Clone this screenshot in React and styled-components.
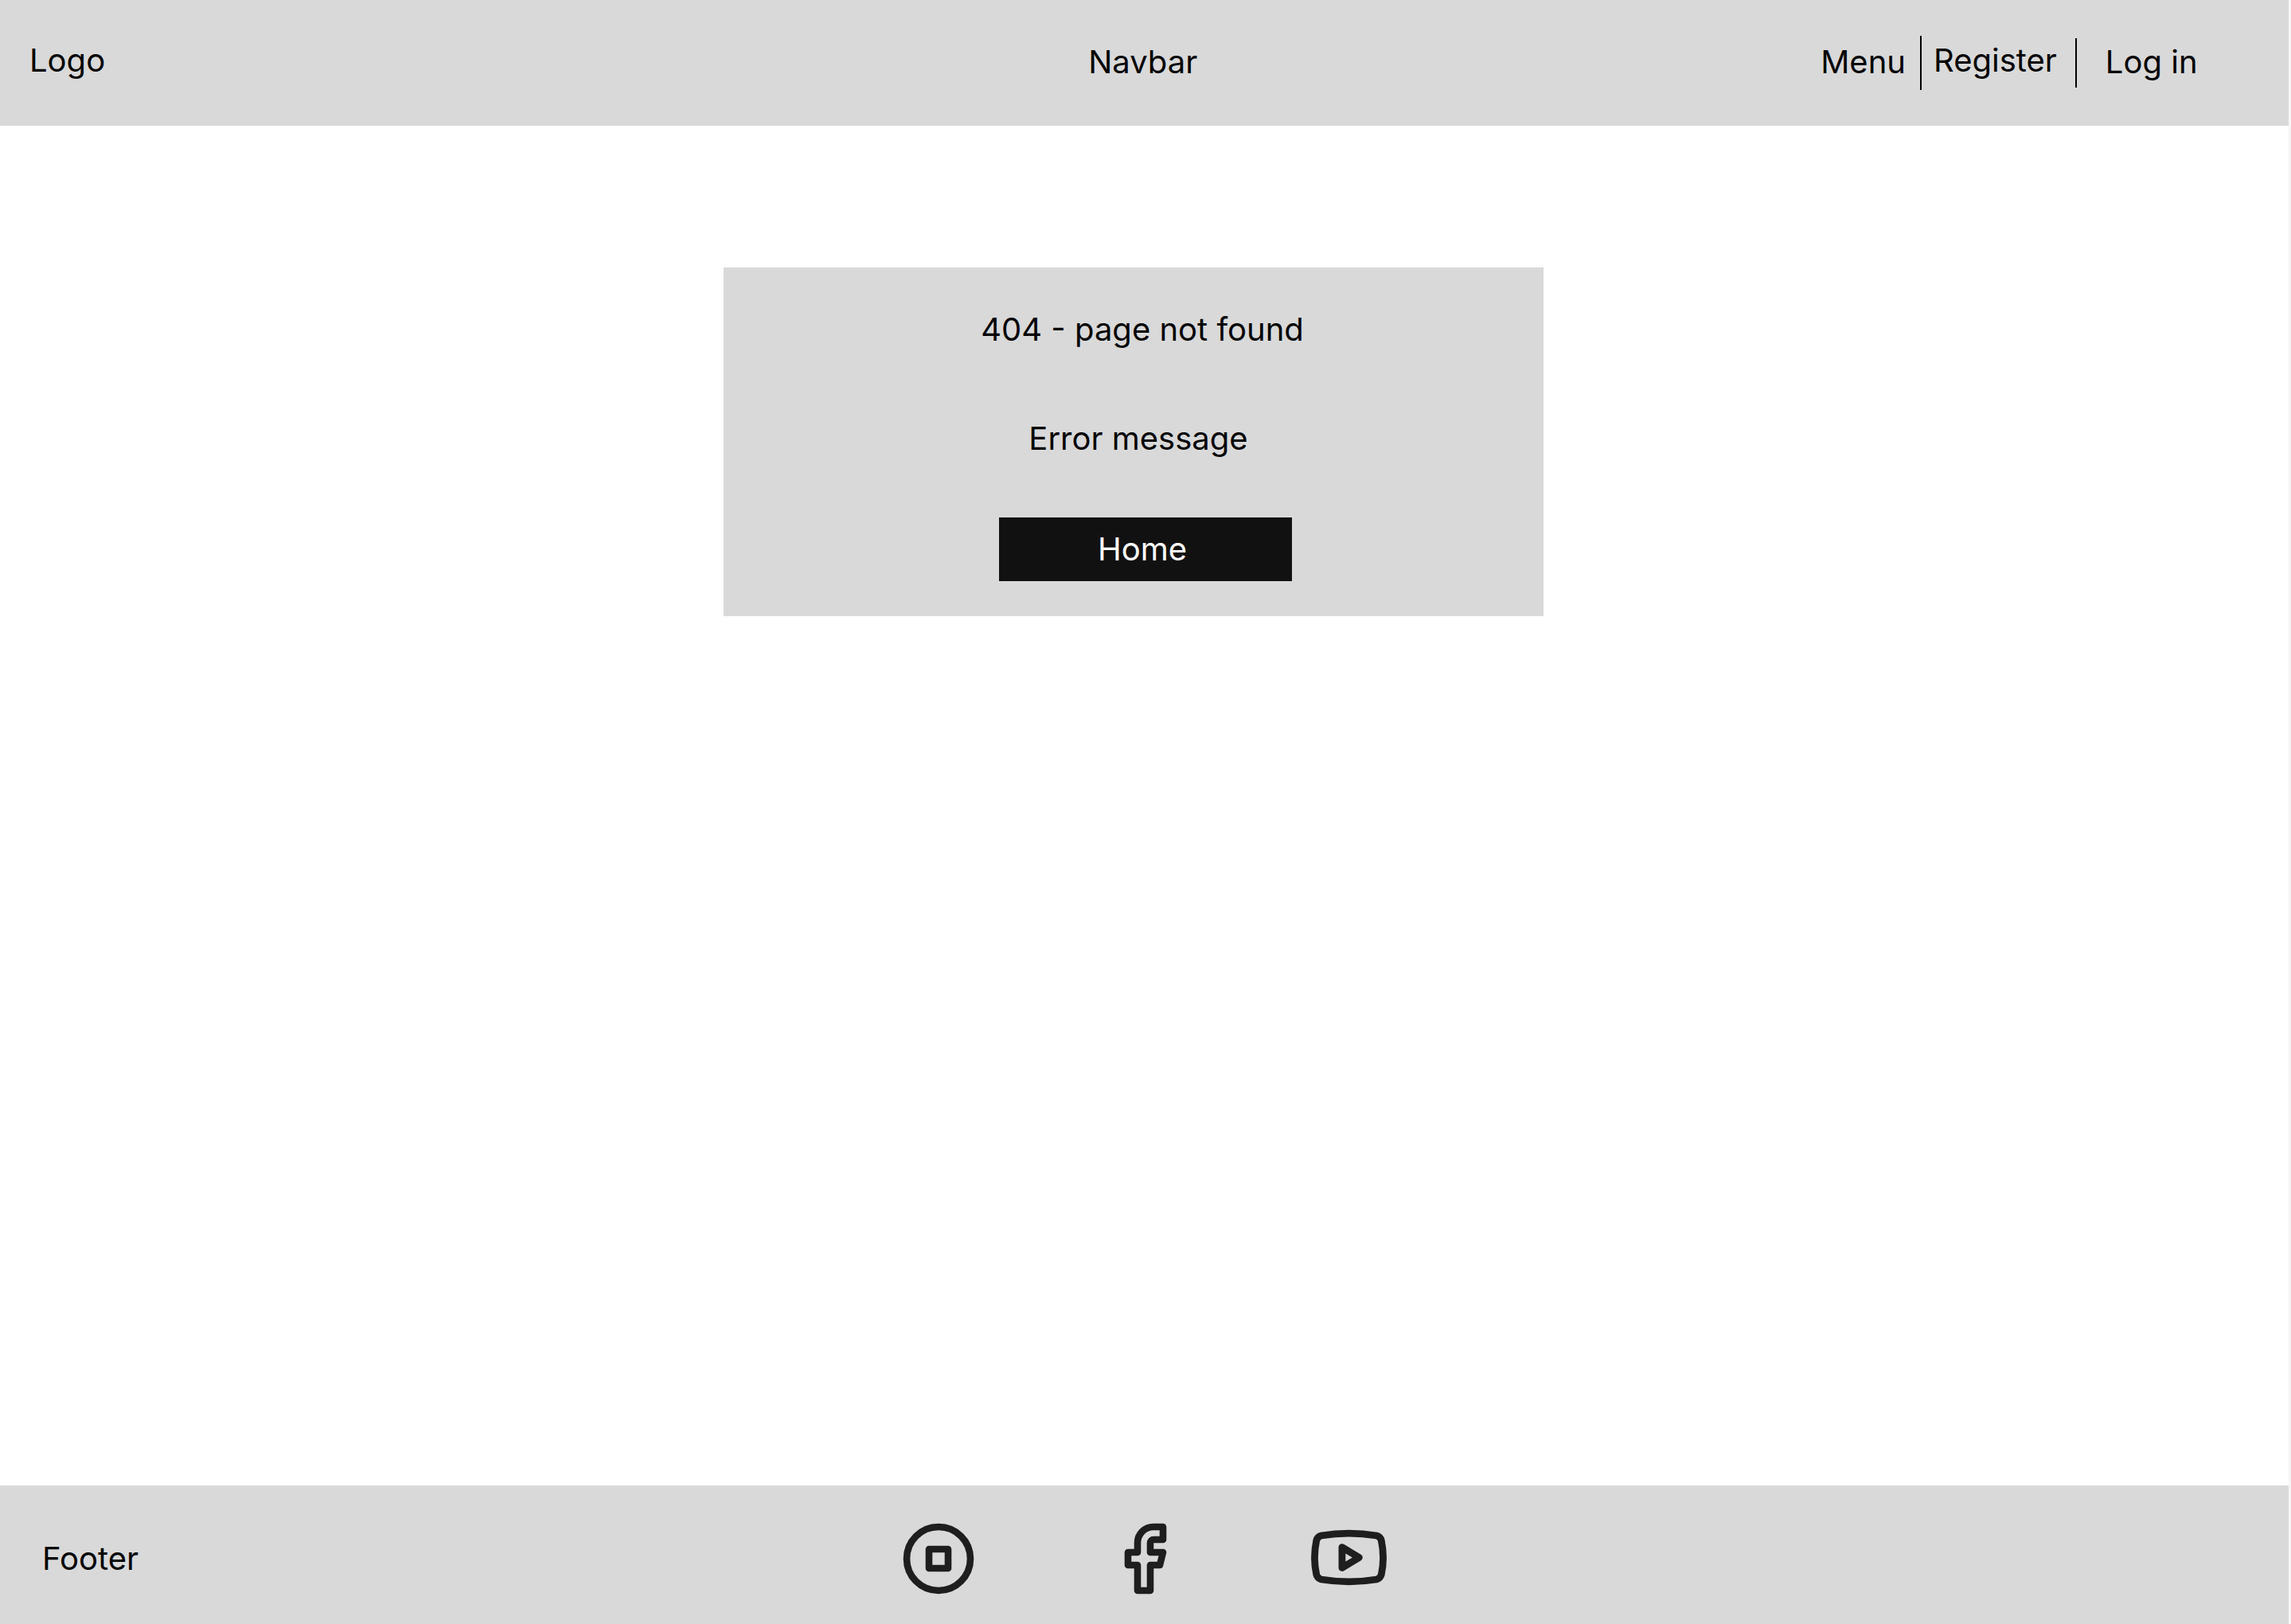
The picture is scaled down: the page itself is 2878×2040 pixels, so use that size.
import React from 'react';
import styled, { createGlobalStyle } from 'styled-components';
import { Facebook, Youtube } from 'lucide-react';

const GlobalStyle = createGlobalStyle`
    html, body {
        margin: 0;
        padding: 0;
        background: #f5f5f5;
        font-family: Inter, "Liberation Sans", sans-serif;
        font-size: 40px;
        line-height: 48px;
        color: #000000;
    }
`;

const Page = styled.div`
    display: flex;
    flex-direction: column;
    width: 2875px;
    height: 2040px;
    background: #ffffff;
`;

const Navbar = styled.header`
    display: flex;
    align-items: center;
    height: 158px;
    padding-left: 37px;
    background: #d9d9d9;
`;

const NavText = styled.a`
    margin-left: ${(p) => p.$left || 0}px;
    transform: translateY(${(p) => p.$lift}px);
`;

const Divider = styled.span`
    width: 2px;
    height: ${(p) => p.$height}px;
    margin-left: ${(p) => p.$left}px;
    background: #000000;
`;

const Content = styled.main`
    flex: 1;
    padding: 178px 0 0 909px;
`;

const ErrorPanel = styled.section`
    display: flex;
    flex-direction: column;
    align-items: center;
    box-sizing: border-box;
    width: 1030px;
    height: 438px;
    padding-top: 54px;
    background: #d9d9d9;
`;

const PanelText = styled.p`
    margin: 0 0 ${(p) => p.$bottom}px ${(p) => p.$shift}px;
`;

const HomeButton = styled.button`
    width: 368px;
    height: 80px;
    margin-left: 30px;
    padding: 0 8px 0 0;
    border: none;
    border-radius: 0;
    background: #111111;
    color: #ffffff;
    font: inherit;
`;

const Footer = styled.footer`
    display: grid;
    grid-template-columns: 1078px auto;
    align-items: center;
    box-sizing: border-box;
    height: 174px;
    padding: 10px 0 0 53px;
    background: #d9d9d9;
`;

const SocialRow = styled.div`
    display: flex;
    align-items: center;
    gap: 160px;
    color: #1e1e1e;
`;

const FacebookIcon = styled(Facebook)`
    margin: 0 -2px 0 2px;
`;

const YoutubeIcon = styled(Youtube)`
    margin-bottom: 4px;
`;

function StopIcon() {
    return (
        <svg width="96" height="96" viewBox="0 0 24 24" fill="none" stroke="currentColor" strokeWidth="2.15" strokeLinejoin="round">
            <circle cx="12" cy="12" r="10" />
            <rect x="9" y="9" width="6" height="6" />
        </svg>
    );
}

export default function App() {
    return (
        <Page>
            <GlobalStyle />
            <Navbar>
                <NavText $lift={-3}>Logo</NavText>
                <NavText $left={1235} $lift={-1}>Navbar</NavText>
                <NavText $left={783} $lift={-1}>Menu</NavText>
                <Divider $height={68} $left={18} />
                <NavText $left={15} $lift={-3}>Register</NavText>
                <Divider $height={62} $left={23} />
                <NavText $left={36} $lift={-1}>Log in</NavText>
            </Navbar>
            <Content>
                <ErrorPanel>
                    <PanelText $shift={22} $bottom={89}>404 - page not found</PanelText>
                    <PanelText $shift={12} $bottom={75}>Error message</PanelText>
                    <HomeButton>Home</HomeButton>
                </ErrorPanel>
            </Content>
            <Footer>
                <span>Footer</span>
                <SocialRow>
                    <StopIcon />
                    <FacebookIcon size={96} strokeWidth={2.15} />
                    <YoutubeIcon size={103} strokeWidth={2.05} />
                </SocialRow>
            </Footer>
        </Page>
    );
}
